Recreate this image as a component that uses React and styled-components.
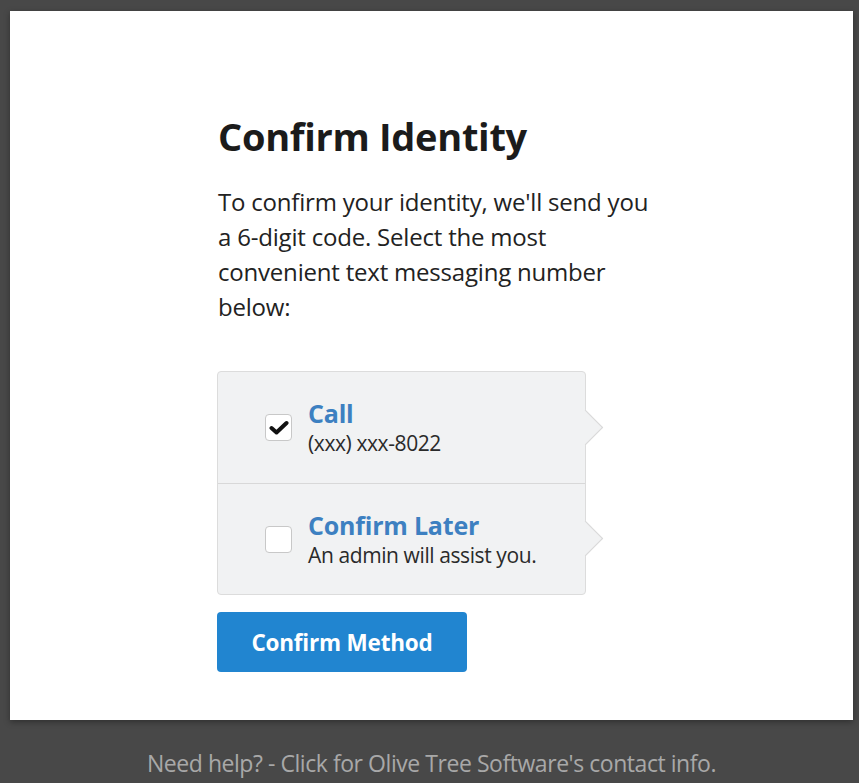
import React, { useState } from "react"
import styled, { createGlobalStyle } from "styled-components"

const GlobalStyle = createGlobalStyle`
  html, body {
    margin: 0;
    padding: 0;
    background: #484848;
    font-family: "Open Sans", "Noto Sans", sans-serif;
  }
`

const methods = [
  { id: "call", title: "Call", detail: "(xxx) xxx-8022" },
  { id: "later", title: "Confirm Later", detail: "An admin will assist you." },
]

const App = () => {
  const [selected, setSelected] = useState("call")

  return (
    <Page>
      <GlobalStyle />
      <Card>
        <Content>
          <Heading>Confirm Identity</Heading>
          <Intro>
            To confirm your identity, we'll send you a 6-digit code. Select the
            most convenient text messaging number below:
          </Intro>
          <MethodList>
            {methods.map(m => (
              <MethodRow key={m.id} onClick={() => setSelected(m.id)}>
                <Checkbox>
                  {selected === m.id && (
                    <svg width="20" height="16" viewBox="0 0 20 16">
                      <path
                        d="M2.5 8 L7.5 12.5 L17.5 3"
                        fill="none"
                        stroke="#111"
                        strokeWidth="4"
                        strokeLinecap="round"
                        strokeLinejoin="round"
                      />
                    </svg>
                  )}
                </Checkbox>
                <MethodText>
                  <MethodTitle>{m.title}</MethodTitle>
                  <MethodDetail>{m.detail}</MethodDetail>
                </MethodText>
                <Arrow />
              </MethodRow>
            ))}
          </MethodList>
          <ConfirmButton>Confirm Method</ConfirmButton>
        </Content>
      </Card>
      <Footer>Need help? - Click for Olive Tree Software's contact info.</Footer>
    </Page>
  )
}

const Page = styled.div`
  min-height: 783px;
  padding: 11px 6px 0 10px;
  box-sizing: border-box;
`

const Card = styled.div`
  background: #fff;
  height: 709px;
  box-shadow: 0 2px 6px rgba(0, 0, 0, 0.35);
`

const Content = styled.div`
  padding: 100px 0 0 207px;
  width: 450px;
`

const Heading = styled.h1`
  margin: 0 0 0 1px;
  font-size: 38px;
  line-height: 50px;
  font-weight: 700;
  color: #1b1b1b;
  letter-spacing: -0.3px;
`

const Intro = styled.p`
  margin: 23px 0 0 1px;
  max-width: 435px;
  font-size: 24px;
  line-height: 35px;
  color: #222;
  letter-spacing: -0.2px;
`

const MethodList = styled.div`
  margin-top: 47px;
  width: 367px;
  background: #f1f2f3;
  border: 1px solid #dcdcdc;
  border-radius: 4px;
`

const MethodRow = styled.div`
  position: relative;
  display: flex;
  align-items: center;
  height: 111px;
  padding-left: 47px;
  box-sizing: border-box;
  cursor: pointer;

  & + & {
    border-top: 1px solid #d8d8d8;
  }
`

const Checkbox = styled.span`
  display: flex;
  align-items: center;
  justify-content: center;
  width: 25px;
  height: 25px;
  background: #fff;
  border: 1px solid #c8c8c8;
  border-radius: 4px;
  flex-shrink: 0;
`

const MethodText = styled.div`
  margin-left: 16px;
  display: flex;
  flex-direction: column;
`

const MethodTitle = styled.span`
  font-size: 25px;
  line-height: 31px;
  font-weight: 700;
  color: #3d80c1;
  letter-spacing: -0.2px;
`

const MethodDetail = styled.span`
  font-size: 21px;
  line-height: 28px;
  color: #2a2a2a;
  letter-spacing: -0.4px;
`

const Arrow = styled.span`
  position: absolute;
  right: -13px;
  top: 50%;
  width: 25px;
  height: 25px;
  margin-top: -13px;
  background: #f1f2f3;
  border-top: 1px solid #d8d8d8;
  border-right: 1px solid #d8d8d8;
  transform: rotate(45deg);
  box-sizing: border-box;
`

const ConfirmButton = styled.button`
  margin-top: 17px;
  width: 250px;
  height: 60px;
  background: #2185d0;
  color: #fff;
  border: none;
  border-radius: 4px;
  font-family: "Open Sans", "Noto Sans", sans-serif;
  font-size: 22.5px;
  font-weight: 700;
  letter-spacing: -0.2px;
  cursor: pointer;
`

const Footer = styled.div`
  text-align: center;
  padding-top: 27px;
  font-family: "Open Sans", "Noto Sans", sans-serif;
  font-size: 23px;
  color: #a8a8a8;
  letter-spacing: -0.45px;
`

export default App
